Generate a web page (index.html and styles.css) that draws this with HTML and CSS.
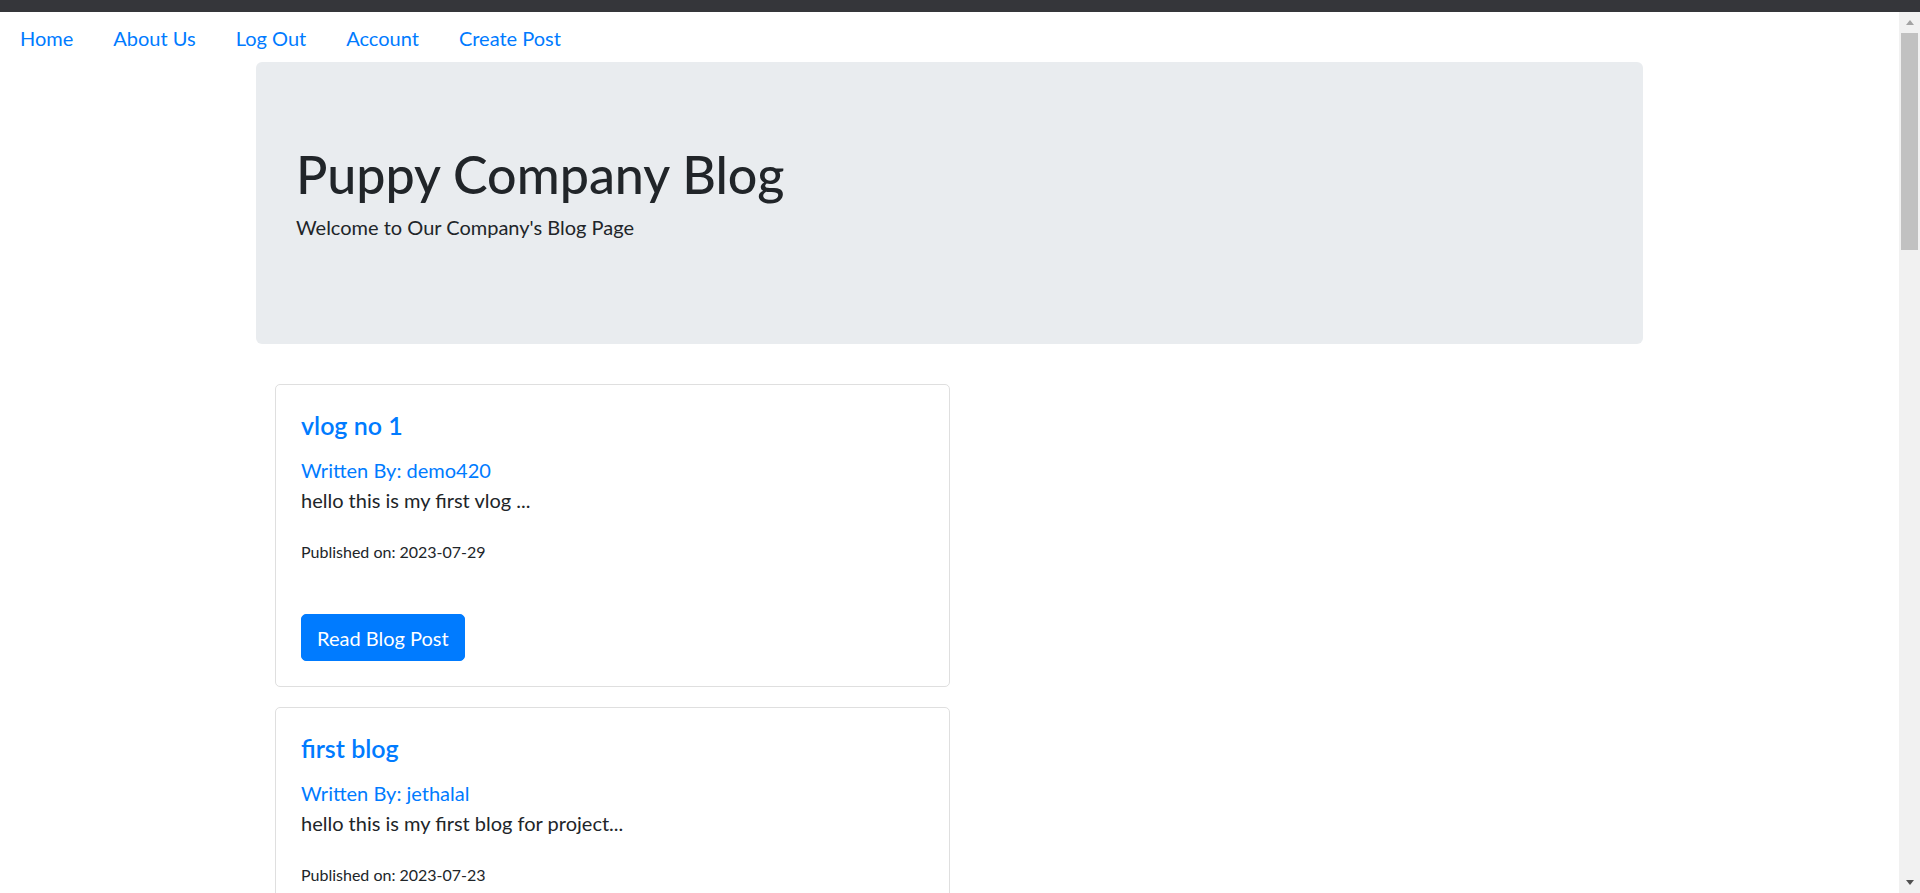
FILE: index.html
```html
<!DOCTYPE html>
<html lang="en">
<head>
<meta charset="utf-8">
<title>Puppy Company Blog</title>
<link rel="stylesheet" href="styles.css">
</head>
<body>
<div class="titlebar"></div>
<div class="window">
  <div class="page">
    <nav class="nav">
      <a class="nav-link" href="#">Home</a>
      <a class="nav-link" href="#">About Us</a>
      <a class="nav-link" href="#">Log Out</a>
      <a class="nav-link" href="#">Account</a>
      <a class="nav-link" href="#">Create Post</a>
    </nav>
    <div class="container">
      <div class="jumbotron">
        <h1 class="display">Puppy Company Blog</h1>
        <p class="lead">Welcome to Our Company's Blog Page</p>
      </div>
      <div class="posts">
        <div class="card">
          <div class="card-body">
            <h5 class="card-title">vlog no 1</h5>
            <a class="author" href="#">Written By: demo420</a>
            <p class="excerpt">hello this is my first vlog ...</p>
            <p class="meta"><small>Published on: 2023-07-29</small></p>
            <a class="btn" href="#">Read Blog Post</a>
          </div>
        </div>
        <div class="card">
          <div class="card-body">
            <h5 class="card-title">first blog</h5>
            <a class="author" href="#">Written By: jethalal</a>
            <p class="excerpt">hello this is my first blog for project...</p>
            <p class="meta"><small>Published on: 2023-07-23</small></p>
            <a class="btn" href="#">Read Blog Post</a>
          </div>
        </div>
      </div>
    </div>
  </div>
  <div class="scrollbar">
    <div class="sb-btn"><span class="arrow-up"></span></div>
    <div class="sb-track"><div class="sb-thumb"></div></div>
    <div class="sb-btn"><span class="arrow-down"></span></div>
  </div>
</div>
</body>
</html>
```

FILE: styles.css
```css
* { box-sizing: border-box; }

html, body {
  margin: 0;
  height: 100%;
  overflow: hidden;
}

body {
  font-family: Lato, "Noto Sans", sans-serif;
  font-size: 20px;
  line-height: 1.5;
  color: #212529;
  background: #fff;
  display: flex;
  flex-direction: column;
}

.titlebar {
  height: 12px;
  flex: none;
  background: #35363a;
}

.window {
  flex: 1;
  display: flex;
  min-height: 0;
}

.page {
  flex: 1;
  min-width: 0;
  overflow: hidden;
}

.nav {
  display: flex;
}

.nav-link {
  display: block;
  padding: 11px 20px 9px;
  color: #007bff;
  text-decoration: none;
}

.container {
  width: 1387px;
  margin: 0 auto;
}

.jumbotron {
  background: #e9ecef;
  border-radius: 6px;
  padding: 81px 40px 82px;
  margin-bottom: 40px;
}

.display {
  font-size: 52px;
  font-weight: 500;
  line-height: 1.2;
  margin: 0 0 7px;
}

.lead {
  margin: 0 0 20px;
  font-size: 20px;
}

.posts {
  width: 694px;
  padding-left: 19px;
}

.card {
  border: 1px solid #dfdfdf;
  border-radius: 5px;
  margin-bottom: 20px;
}

.card-body {
  padding: 25px;
}

.card-title {
  margin: 0 0 15px;
  font-size: 25px;
  font-weight: 600;
  line-height: 1.2;
  color: #007bff;
}

.author {
  display: block;
  color: #007bff;
  text-decoration: none;
}

.excerpt {
  margin: 0 0 20px;
}

.meta {
  margin: 0 0 49px;
}

.meta small {
  font-size: 16px;
}

.btn {
  display: inline-block;
  padding: 7.5px 15px;
  border: 1px solid #007bff;
  border-radius: 5px;
  background: #007bff;
  color: #fff;
  text-decoration: none;
  line-height: 30px;
}

.scrollbar {
  width: 21px;
  flex: none;
  background: #f1f1f1;
  display: flex;
  flex-direction: column;
}

.sb-btn {
  height: 21px;
  flex: none;
  display: flex;
  align-items: center;
  justify-content: center;
}

.sb-track {
  flex: 1;
  padding: 0 2px;
}

.sb-thumb {
  height: 217px;
  background: #c1c1c1;
}

.arrow-up {
  width: 0;
  height: 0;
  border-left: 4.5px solid transparent;
  border-right: 4.5px solid transparent;
  border-bottom: 5px solid #a3a3a3;
}

.arrow-down {
  width: 0;
  height: 0;
  border-left: 4.5px solid transparent;
  border-right: 4.5px solid transparent;
  border-top: 5px solid #505050;
}
```
